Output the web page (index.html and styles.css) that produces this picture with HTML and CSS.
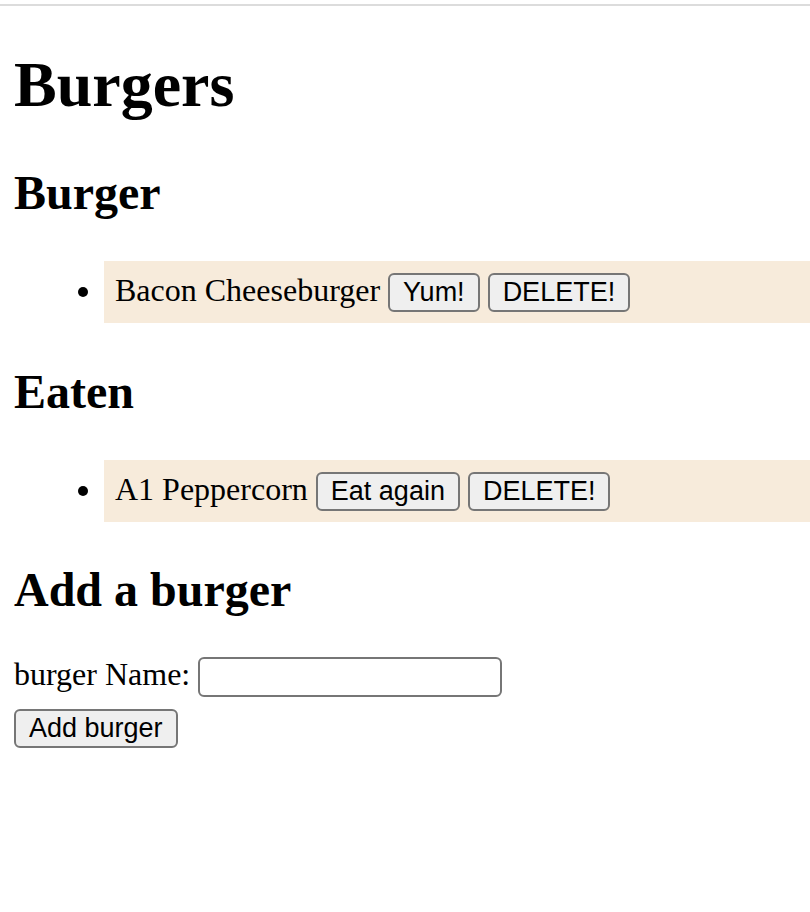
FILE: index.html
```html
<!DOCTYPE html>
<html>
<head>
<meta charset="utf-8">
<title>Burgers</title>
<link rel="stylesheet" href="styles.css">
</head>
<body>
<div class="topline"></div>
<main class="page">
  <h1 class="title">Burgers</h1>
  <h2 class="section">Burger</h2>
  <ul class="list">
    <li class="item">Bacon Cheeseburger <button class="btn">Yum!</button> <button class="btn">DELETE!</button></li>
  </ul>
  <h2 class="section">Eaten</h2>
  <ul class="list">
    <li class="item">A1 Peppercorn <button class="btn">Eat again</button> <button class="btn">DELETE!</button></li>
  </ul>
  <h2 class="section section-add">Add a burger</h2>
  <form class="form">
    <div class="form-row">burger Name: <input class="field" type="text"></div>
    <div class="form-row form-actions"><button class="btn" type="button">Add burger</button></div>
  </form>
</main>
</body>
</html>
```

FILE: styles.css
```css
html, body {
  margin: 0;
  padding: 0;
  background: #ffffff;
}

body {
  padding-top: 4px;
  font-family: "Liberation Serif", "Times New Roman", serif;
  font-size: 32px;
  color: #000000;
}

.topline {
  height: 2px;
  background: #dcdcdc;
}

.page {
  padding: 0 0 0 14px;
}

.title {
  font-size: 64px;
  line-height: 74px;
  font-weight: bold;
  margin: 42px 0 43px;
}

.section {
  font-size: 48px;
  line-height: 56px;
  font-weight: bold;
  margin: 41px 0 40px;
}

.section-add {
  margin: 39px 0 38px;
}

.list {
  margin: 40px 0;
  padding: 0 0 0 90px;
  list-style: disc;
}

.item {
  background: #f7ebdb;
  padding: 11px 11px;
}

.btn {
  font-family: "Liberation Sans", Arial, sans-serif;
  font-size: 27px;
  line-height: 31px;
  height: 39px;
  box-sizing: border-box;
  padding: 2px 13px;
  border: 2px solid #767676;
  border-radius: 6px;
  background: #efefef;
  color: #000000;
  margin: 0;
}

.form {
  margin: 0;
}

.field {
  font-family: "Liberation Sans", Arial, sans-serif;
  font-size: 27px;
  line-height: 31px;
  width: 304px;
  height: 40px;
  box-sizing: border-box;
  padding: 2px 4px;
  border: 2px solid #767676;
  border-radius: 6px;
  background: #ffffff;
  margin: 0;
  vertical-align: baseline;
}

.form-actions {
  padding-top: 11px;
}
```
